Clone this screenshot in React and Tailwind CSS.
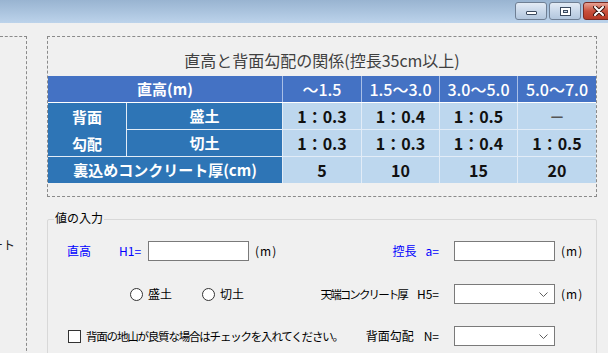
import React from "react";

function TitleBar() {
  return (
    <div className="h-[23px] bg-linear-to-b from-[#99b4d1] to-[#bcd3eb] flex justify-end items-start pt-[2px]">
      <div className="w-[32px] h-[18px] rounded-[3px] border border-[#6f7f94] bg-linear-to-b from-[#e3ebf5] via-[#c9d8ea] to-[#b3c7de] flex items-end justify-center pb-[4px]">
        <div className="w-[11px] h-[4px] rounded-[1px] bg-white border border-[#3b4a5e]" />
      </div>
      <div className="ml-[2px] w-[32px] h-[18px] rounded-[3px] border border-[#6f7f94] bg-linear-to-b from-[#e3ebf5] via-[#c9d8ea] to-[#b3c7de] flex items-center justify-center">
        <div className="w-[11px] h-[9px] border border-[#3b4a5e] bg-white p-[2px]">
          <div className="w-full h-full border border-[#3b4a5e] bg-[#c9d8ea]" />
        </div>
      </div>
      <div className="ml-[2px] mr-[-6px] w-[31px] h-[18px] rounded-[3px] border border-[#7a2a22] bg-linear-to-b from-[#e6a295] via-[#c9503c] to-[#b63a26] flex items-center justify-center">
        <svg width="12" height="10" viewBox="0 0 12 10">
          <path d="M2 1 L10 9 M10 1 L2 9" stroke="#3a1510" strokeWidth="4" strokeLinecap="round" />
          <path d="M2 1 L10 9 M10 1 L2 9" stroke="#ffffff" strokeWidth="2" strokeLinecap="round" />
        </svg>
      </div>
    </div>
  );
}

const H = "h-[26px] flex items-center justify-center";

function Table() {
  const dark = "bg-[#2e75b6] text-white font-bold text-[15px]";
  const light = "bg-[#bdd7ee] text-[#111] font-bold text-[16px]";
  return (
    <div className="flex flex-col">
      <div className="grid grid-cols-[234px_78px_77px_77px_78px] gap-px bg-[#a9bfe6]">
        <div className={`${H} bg-[#4472c4] text-white font-bold text-[15px]`}>直高(m)</div>
        <div className={`${H} bg-[#4472c4] text-white font-medium text-[16px]`}>～1.5</div>
        <div className={`${H} bg-[#4472c4] text-white font-medium text-[16px]`}>1.5～3.0</div>
        <div className={`${H} bg-[#4472c4] text-white font-medium text-[16px]`}>3.0～5.0</div>
        <div className={`${H} bg-[#4472c4] text-white font-medium text-[16px]`}>5.0～7.0</div>
      </div>
      <div className="h-px bg-white" />
      <div className="grid grid-cols-[78px_155px_78px_77px_77px_78px] grid-rows-[26px_26px_26px] gap-px bg-[#e2ecf7]">
        <div className={`row-span-2 ${dark} flex flex-col items-center justify-center leading-[27px]`}>
          <span>背面</span>
          <span>勾配</span>
        </div>
        <div className={`${H} ${dark}`}>盛土</div>
        <div className={`${H} ${light}`}>1：0.3</div>
        <div className={`${H} ${light}`}>1：0.4</div>
        <div className={`${H} ${light}`}>1：0.5</div>
        <div className={`${H} ${light} text-[#555]`}>－</div>
        <div className={`${H} ${dark}`}>切土</div>
        <div className={`${H} ${light}`}>1：0.3</div>
        <div className={`${H} ${light}`}>1：0.3</div>
        <div className={`${H} ${light}`}>1：0.4</div>
        <div className={`${H} ${light}`}>1：0.5</div>
        <div className={`${H} ${dark} col-span-2`}>裏込めコンクリート厚(cm)</div>
        <div className={`${H} ${light}`}>5</div>
        <div className={`${H} ${light}`}>10</div>
        <div className={`${H} ${light}`}>15</div>
        <div className={`${H} ${light}`}>20</div>
      </div>
    </div>
  );
}

function Chevron() {
  return (
    <svg width="9" height="5" viewBox="0 0 9 5" className="mr-[6px]">
      <path d="M0.5 0.5 L4.5 4.5 L8.5 0.5" fill="none" stroke="#606060" strokeWidth="1" />
    </svg>
  );
}

function Select() {
  return (
    <div className="w-[101px] h-[20px] border border-[#7a7a7a] bg-white flex items-center justify-end">
      <Chevron />
    </div>
  );
}

function Radio({ label, className = "" }) {
  return (
    <div className={`flex items-center ${className}`}>
      <div className="w-[13px] h-[13px] rounded-full border border-[#333] bg-white" />
      <span className="ml-[5px]">{label}</span>
    </div>
  );
}

function Unit() {
  return <span className="ml-[6px] tracking-[1px]">(m)</span>;
}

function GroupBox() {
  return (
    <div className="mt-[22px] h-[150px] relative border border-[#d8d8d8] rounded-[2px] text-[12px] leading-[16px]">
      <div className="absolute -top-[10px] left-[6px] px-[1px] bg-[#f0f0f0] text-black">値の入力</div>
      <div className="pt-[21px] flex flex-col">
        <div className="h-[20px] flex items-center">
          <div className="w-[252px] flex items-center">
            <span className="ml-[19px] w-[52px] text-[#0000ff]">直高</span>
            <span className="w-[29px] text-[#0000ff]">H1=</span>
            <div className="w-[101px] h-[20px] border border-[#7a7a7a] bg-white" />
            <Unit />
          </div>
          <div className="w-[139px] flex justify-end gap-[9px] text-[#0000ff]">
            <span>控長</span>
            <span>a=</span>
          </div>
          <div className="ml-[15px] w-[101px] h-[20px] border border-[#7a7a7a] bg-white" />
          <Unit />
        </div>
        <div className="mt-[23px] h-[20px] flex items-center">
          <div className="w-[252px] flex items-center">
            <Radio label="盛土" className="ml-[82px]" />
            <Radio label="切土" className="ml-[30px]" />
          </div>
          <div className="w-[139px] flex justify-end items-center gap-[10px]">
            <span className="text-[11.5px] tracking-[-1.9px]">天端コンクリート厚</span>
            <span>H5=</span>
          </div>
          <div className="ml-[15px]">
            <Select />
          </div>
          <Unit />
        </div>
        <div className="mt-[22px] h-[20px] flex items-center">
          <div className="w-[252px] flex items-center whitespace-nowrap">
            <div className="ml-[20px] w-[13px] h-[13px] border border-[#333] bg-white shrink-0" />
            <span className="ml-[5px] text-[11.5px] tracking-[-1.2px]">背面の地山が良質な場合はチェックを入れてください。</span>
          </div>
          <div className="w-[139px] flex justify-end gap-[10px]">
            <span>背面勾配</span>
            <span>N=</span>
          </div>
          <div className="ml-[15px]">
            <Select />
          </div>
        </div>
      </div>
    </div>
  );
}

export default function App() {
  return (
    <div className="w-[608px] h-[353px] overflow-hidden bg-[#f0f0f0] font-['Noto_Sans_CJK_JP','Noto_Sans',sans-serif] text-black">
      <TitleBar />
      <div className="flex mt-[13px]">
        <div className="w-[27px] h-[330px] shrink-0 border-t border-r border-dashed border-[#8a8a8a]">
          <div className="mt-[200px] pr-[11px] flex justify-end whitespace-nowrap text-[12px] leading-[16px] text-[#222]">
            <span>コンクリート</span>
          </div>
        </div>
        <div className="ml-[20px] w-[550px] shrink-0">
          <div className="h-[161px] border border-dashed border-[#8a8a8a]">
            <div className="h-[39px] pt-[13px] text-center text-[16px] leading-[20px] text-[#404040]">
              直高と背面勾配の関係(控長35cm以上)
            </div>
            <Table />
          </div>
          <GroupBox />
        </div>
      </div>
    </div>
  );
}
